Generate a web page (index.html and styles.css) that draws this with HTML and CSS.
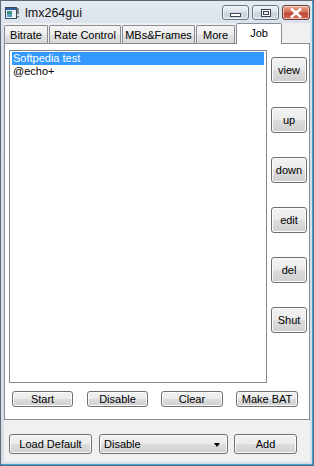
FILE: index.html
```html
<!DOCTYPE html>
<html>
<head>
<meta charset="utf-8">
<link rel="stylesheet" href="styles.css">
</head>
<body>
<div class="window">
  <div class="titlebar">
    <svg class="appicon" width="14" height="13" viewBox="0 0 14 13">
      <rect x="0.5" y="0.5" width="11" height="11" fill="#e8eef4" stroke="#3c4a5c"/>
      <rect x="1" y="1" width="10" height="2" fill="#2f5f9e"/>
      <rect x="2" y="4" width="5" height="6" fill="#3a8f7a"/>
      <rect x="2" y="7" width="5" height="3" fill="#5aa0c8"/>
      <rect x="12.5" y="1" width="1" height="6" fill="#222"/>
      <rect x="12.5" y="9" width="1" height="1.5" fill="#222"/>
    </svg>
    <span class="title">lmx264gui</span>
    <div class="caption">
      <div class="cbtn min"><span class="minbar"></span></div>
      <div class="cbtn max"><span class="maxbox"></span></div>
      <div class="cbtn close">
        <svg width="12" height="10" viewBox="0 0 12 10"><path d="M2 1.5 L10 8.5 M10 1.5 L2 8.5" stroke="#fff" stroke-width="2.6" stroke-linecap="square"/></svg>
      </div>
    </div>
  </div>
  <div class="client">
    <div class="tabs">
      <div class="tab t1">Bitrate</div>
      <div class="tab t2">Rate Control</div>
      <div class="tab t3">MBs&amp;Frames</div>
      <div class="tab t4">More</div>
      <div class="tab active">Job</div>
    </div>
    <div class="panel">
      <div class="main">
        <div class="list">
          <div class="item sel">Softpedia test</div>
          <div class="item">@echo+</div>
        </div>
        <div class="side">
          <div class="btn sbtn">view</div>
          <div class="btn sbtn">up</div>
          <div class="btn sbtn">down</div>
          <div class="btn sbtn">edit</div>
          <div class="btn sbtn">del</div>
          <div class="btn sbtn">Shut</div>
        </div>
      </div>
      <div class="actions">
        <div class="btn abtn w61">Start</div>
        <div class="btn abtn w61 g14">Disable</div>
        <div class="btn abtn w62 g13">Clear</div>
        <div class="btn abtn w62 g13">Make BAT</div>
      </div>
    </div>
    <div class="footer">
      <div class="btn fbtn load">Load Default</div>
      <div class="btn fbtn combo"><span>Disable</span><span class="arrow"></span></div>
      <div class="btn fbtn add">Add</div>
    </div>
  </div>
</div>
</body>
</html>
```

FILE: styles.css
```css
* { box-sizing: border-box; }
html, body { margin: 0; padding: 0; }
body {
  width: 314px;
  height: 466px;
  overflow: hidden;
  font-family: "Liberation Sans", Arial, sans-serif;
  font-size: 11px;
  color: #000;
  background: #d6dee8;
}
.window {
  width: 314px;
  height: 466px;
  border: 1px solid #5e6975;
  box-shadow: inset -1px -1px 0 #3aa6de;
  background: linear-gradient(#e4eaf1, #d8e0ea 30px, #d5dde7);
  padding: 0 3px 3px 3px;
  display: flex;
  flex-direction: column;
}
.titlebar {
  height: 22px;
  display: flex;
  align-items: center;
}
.appicon { margin-left: 1px; margin-top: 2px; }
.title {
  margin-left: 6px;
  font-size: 12.5px;
  margin-top: 1px;
  color: #111;
}
.caption {
  margin-left: auto;
  display: flex;
  align-items: flex-start;
  height: 22px;
  padding-top: 4px;
}
.cbtn {
  height: 15px;
  border: 1px solid #6b7684;
  border-radius: 3px;
  display: flex;
  align-items: center;
  justify-content: center;
  box-shadow: inset 0 0 0 1px rgba(255,255,255,0.6);
}
.min, .max {
  width: 27px;
  margin-right: 3px;
  background: linear-gradient(#eef2f6, #dce3eb 45%, #c9d2dd 55%, #d6dde6);
}
.minbar {
  width: 11px; height: 4px;
  border: 1px solid #3c4656;
  background: #fff;
  margin-top: 4px;
}
.maxbox {
  width: 10px; height: 8px;
  border: 1px solid #3c4656;
  background: #e8ecf0;
  box-shadow: inset 0 0 0 1px #fff, inset 0 0 0 2px #3c4656;
}
.close {
  width: 28px;
  border-color: #6b3a34;
  background: linear-gradient(#e8a890, #d7705c 45%, #c24a34 55%, #cf6650);
}
.client {
  flex: 1;
  background: #f0f0f0;
  display: flex;
  flex-direction: column;
}
.tabs {
  height: 20px;
  display: flex;
  align-items: flex-end;
}
.tab {
  height: 18px;
  border: 1px solid #898c95;
  border-bottom: none;
  border-radius: 2px 2px 0 0;
  background: linear-gradient(#f5f5f5, #eeeeee 50%, #e3e3e3 51%, #d8d8d8);
  display: flex;
  align-items: center;
  justify-content: center;
  padding-top: 1px;
  margin-right: 1px;
}
.t1 { width: 44px; }
.t2 { width: 72px; }
.t3 { width: 73px; }
.t4 { width: 39px; }
.tab.active {
  width: 46px;
  height: 21px;
  background: #fff;
  margin-bottom: -1px;
  position: relative;
  z-index: 1;
  align-items: flex-start;
  padding-top: 3px;
}
.panel {
  height: 377px;
  border: 1px solid #898c95;
  background: #fff;
  display: flex;
  flex-direction: column;
}
.main {
  display: flex;
  margin-top: 6px;
  margin-left: 4px;
}
.list {
  width: 258px;
  height: 333px;
  border: 1px solid #828790;
  background: #fff;
  padding: 1px 2px;
}
.item {
  height: 13px;
  line-height: 13px;
  padding-left: 1px;
}
.item.sel {
  background: #3399ff;
  color: #fff;
}
.side {
  margin-left: 4px;
  display: flex;
  flex-direction: column;
  gap: 24px;
  padding-top: 7px;
}
.btn {
  border: 1px solid #707070;
  border-radius: 3px;
  background: linear-gradient(#f2f2f2, #ebebeb 50%, #dddddd 51%, #cfcfcf);
  box-shadow: inset 0 0 0 1px #fbfbfb;
  display: flex;
  align-items: center;
  justify-content: center;
  white-space: nowrap;
}
.sbtn { width: 36px; height: 26px; }
.actions {
  display: flex;
  margin-top: 8px;
  padding-left: 7px;
}
.abtn { height: 16px; }
.w61 { width: 61px; }
.w62 { width: 62px; }
.g14 { margin-left: 14px; }
.g13 { margin-left: 13px; }
.footer {
  display: flex;
  margin-top: 14px;
  padding-left: 5px;
}
.fbtn { height: 20px; }
.load { width: 83px; }
.combo {
  width: 129px;
  margin-left: 7px;
  justify-content: space-between;
  padding: 0 7px 0 4px;
}
.arrow {
  width: 0; height: 0;
  border-left: 3.5px solid transparent;
  border-right: 3.5px solid transparent;
  border-top: 4px solid #000;
  margin-top: 1px;
}
.add { width: 63px; margin-left: 6px; }
```
